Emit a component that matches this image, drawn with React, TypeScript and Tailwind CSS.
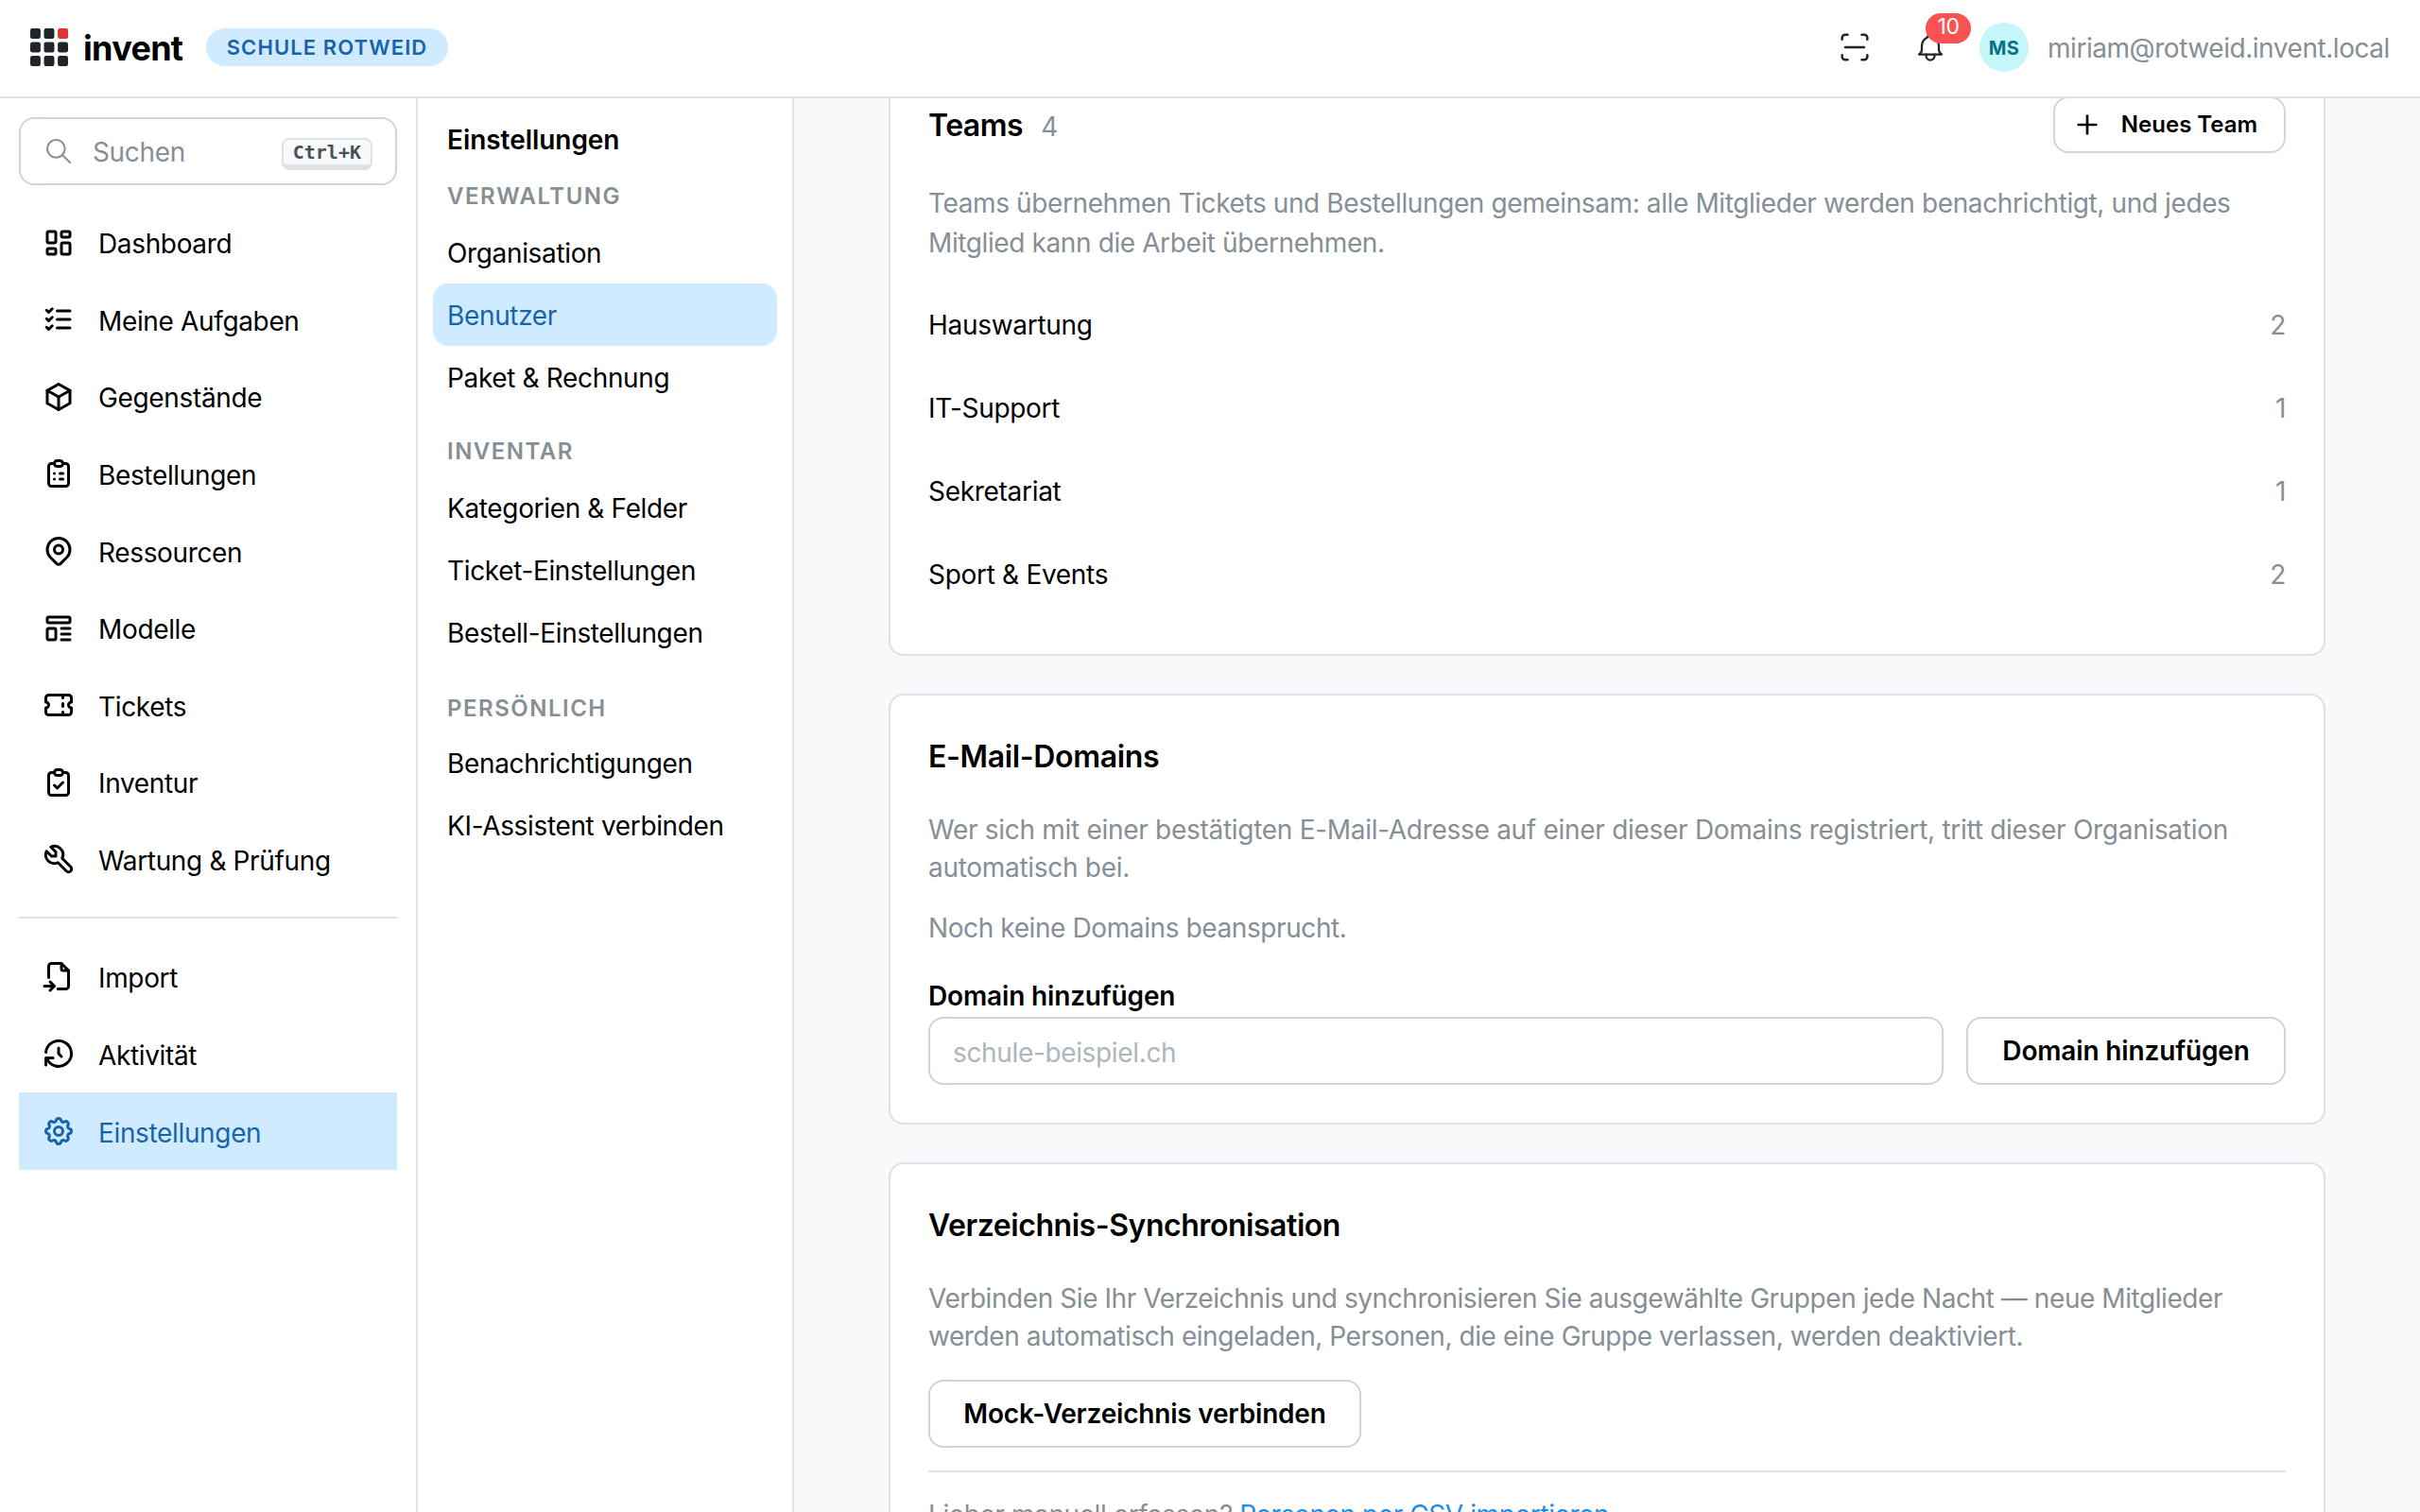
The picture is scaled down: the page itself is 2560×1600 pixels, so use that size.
import type { ReactNode } from "react";
import {
  TbBox,
  TbClipboardCheck,
  TbClipboardList,
  TbFileImport,
  TbHistory,
  TbLayoutDashboard,
  TbListCheck,
  TbMapPin,
  TbPlus,
  TbBell,
  TbSearch,
  TbSettings,
  TbTemplate,
  TbTicket,
  TbTool,
} from "react-icons/tb";
import { clsx } from "clsx";

const mainNav = [
  { label: "Dashboard", icon: TbLayoutDashboard },
  { label: "Meine Aufgaben", icon: TbListCheck },
  { label: "Gegenstände", icon: TbBox },
  { label: "Bestellungen", icon: TbClipboardList },
  { label: "Ressourcen", icon: TbMapPin },
  { label: "Modelle", icon: TbTemplate },
  { label: "Tickets", icon: TbTicket },
  { label: "Inventur", icon: TbClipboardCheck },
  { label: "Wartung & Prüfung", icon: TbTool },
];

const secondaryNav = [
  { label: "Import", icon: TbFileImport },
  { label: "Aktivität", icon: TbHistory },
  { label: "Einstellungen", icon: TbSettings, active: true },
];

const settingsNav = [
  { title: "Verwaltung", items: ["Organisation", "Benutzer", "Paket & Rechnung"] },
  {
    title: "Inventar",
    items: ["Kategorien & Felder", "Ticket-Einstellungen", "Bestell-Einstellungen"],
  },
  { title: "Persönlich", items: ["Benachrichtigungen", "KI-Assistent verbinden"] },
];

const teams = [
  { name: "Hauswartung", members: 2 },
  { name: "IT-Support", members: 1 },
  { name: "Sekretariat", members: 1 },
  { name: "Sport & Events", members: 2 },
];

function Logo() {
  return (
    <svg viewBox="0 0 22 22" className="size-10">
      {[0, 8, 16].map((y) =>
        [0, 8, 16].map((x) => (
          <rect
            key={`${x}-${y}`}
            x={x}
            y={y}
            width="6"
            height="6"
            rx="1.2"
            fill={x === 16 && y === 0 ? "#e03131" : "#212529"}
          />
        ))
      )}
    </svg>
  );
}

function ScanIcon() {
  return (
    <svg
      viewBox="0 0 24 24"
      className="size-10"
      fill="none"
      stroke="#212529"
      strokeWidth="1.5"
      strokeLinecap="round"
      strokeLinejoin="round"
    >
      <path d="M4 7v-1a2 2 0 0 1 2-2h1.5M4 17v1a2 2 0 0 0 2 2h1.5M16.5 4h1.5a2 2 0 0 1 2 2v1M16.5 20h1.5a2 2 0 0 0 2-2v-1M6 12h12" />
    </svg>
  );
}

function NavItem({ label, icon: Icon, active }: { label: string; icon: any; active?: boolean }) {
  return (
    <a
      className={clsx(
        "flex flex-1 items-center gap-6 px-6",
        active && "bg-[#d0ebff] text-[#1864ab]"
      )}
    >
      <Icon className="size-9 shrink-0" />
      <span className="pt-[3px]">{label}</span>
    </a>
  );
}

function Card({ children, className }: { children: ReactNode; className?: string }) {
  return (
    <section
      className={clsx("rounded-2xl border-2 border-[#dee2e6] bg-white px-10", className)}
    >
      {children}
    </section>
  );
}

function Button({ children, className }: { children: ReactNode; className?: string }) {
  return (
    <button
      className={clsx(
        "flex shrink-0 items-center justify-center rounded-2xl border-2 border-[#ced4da] bg-white font-semibold",
        className
      )}
    >
      {children}
    </button>
  );
}

export default function App() {
  return (
    <div className="flex h-[1600px] w-[2560px] flex-col overflow-hidden bg-white font-['Inter',sans-serif] text-[28px] leading-10 tracking-[-0.35px] text-black">
      <header className="flex h-[104px] shrink-0 items-center border-b-2 border-[#dee2e6] px-8 pb-0.5">
        <Logo />
        <span className="ml-4 w-[130px] pt-px text-[36px] font-bold tracking-[-0.7px]">invent</span>
        <span className="flex h-10 w-64 items-center justify-center rounded-full bg-[#d0ebff] text-[22px] font-semibold tracking-[1.1px] text-[#1864ab] uppercase">
          Schule Rotweid
        </span>

        <div className="ml-auto flex items-center">
          <ScanIcon />
          <div className="relative ml-[42px]">
            <TbBell className="size-9 text-[#212529] [stroke-width:1.5]" />
            <span className="absolute -top-[18px] left-[13px] flex h-8 w-12 items-center justify-center rounded-full bg-[#fa5252] pb-1 text-[23px] text-white">
              10
            </span>
          </div>
          <span className="ml-[34px] flex size-[52px] items-center justify-center rounded-full bg-[#c5f6fa] pt-px text-[20px] font-bold tracking-[0.4px] text-[#0b7285]">
            MS
          </span>
          <span className="ml-5 w-[362px] pt-px tracking-[-0.45px] whitespace-nowrap text-[#868e96]">
            miriam@rotweid.invent.local
          </span>
        </div>
      </header>

      <div className="flex min-h-0 flex-1">
        <aside className="w-[442px] shrink-0 border-r-2 border-[#dee2e6] px-5 pt-5">
          <div className="flex h-[72px] items-center rounded-2xl border-2 border-[#ced4da] px-6">
            <TbSearch className="size-8 text-[#868e96] [stroke-width:1.5]" />
            <span className="ml-5 pt-px text-[#868e96]">Suchen</span>
            <kbd className="mt-1.5 ml-auto flex h-[34px] items-center rounded-lg border-2 border-b-[6px] border-[#dee2e6] bg-[#f8f9fa] px-2.5 font-['DejaVu_Sans_Mono',monospace] text-[20px] font-bold tracking-normal text-[#495057]">
              Ctrl+K
            </kbd>
          </div>

          <nav className="mt-5 flex h-[734px] flex-col">
            {mainNav.map((item) => (
              <NavItem key={item.label} {...item} />
            ))}
          </nav>
          <hr className="my-5 border-t-2 border-[#dee2e6]" />
          <nav className="flex h-[246px] flex-col">
            {secondaryNav.map((item) => (
              <NavItem key={item.label} {...item} />
            ))}
          </nav>
        </aside>

        {/* Settings sections */}
        <nav className="w-[398px] shrink-0 border-r-2 border-[#dee2e6] px-4 pt-6">
          <h2 className="px-[15px] font-semibold tracking-[-0.05px]">Einstellungen</h2>
          {settingsNav.map((group, i) => (
            <div key={group.title} className={i === 0 ? "mt-5" : "mt-[26px]"}>
              <h3
                className={clsx(
                  "h-[46px] px-[15px] text-[24px] font-semibold tracking-[1.5px] text-[#868e96] uppercase",
                  i === 2 && "pt-0.5"
                )}
              >
                {group.title}
              </h3>
              {group.items.map((item) => (
                <a
                  key={item}
                  className={clsx(
                    "flex h-[66px] items-center rounded-2xl px-[15px] pt-0.5",
                    item === "Benutzer" && "bg-[#d0ebff] text-[#1864ab]"
                  )}
                >
                  {item}
                </a>
              ))}
            </div>
          ))}
        </nav>

        <main className="flex flex-1 flex-col gap-10 overflow-hidden bg-[#f8f9fa] px-[100px]">
          <Card className="-mt-20 shrink-0 pt-[76px] pb-10">
            <div className="flex h-[60px] items-center">
              <h2 className="pt-0.5 text-[32px] font-semibold tracking-[-0.5px]">Teams</h2>
              <span className="ml-[19px] pt-1 text-[#868e96]">4</span>
              <Button className="ml-auto h-[60px] w-[246px] gap-5 pr-2.5 text-[24px] tracking-normal">
                <TbPlus className="size-8" />
                Neues Team
              </Button>
            </div>
            <p className="mt-8 leading-[42px] tracking-[-0.39px] text-[#868e96]">
              Teams übernehmen Tickets und Bestellungen gemeinsam: alle Mitglieder werden
              benachrichtigt, und jedes Mitglied kann die Arbeit übernehmen.
            </p>
            <ul className="mt-[22px]">
              {teams.map((team) => (
                <li key={team.name} className="flex h-[88px] items-center justify-between">
                  <span className="tracking-[-0.3px]">{team.name}</span>
                  <span className="text-[#868e96]">{team.members}</span>
                </li>
              ))}
            </ul>
          </Card>

          <Card className="h-[456px] shrink-0 pt-[42px]">
            <h2 className="h-11 pt-[3px] text-[32px] font-semibold">E-Mail-Domains</h2>
            <p className="mt-9 tracking-[-0.29px] text-[#868e96]">
              Wer sich mit einer bestätigten E-Mail-Adresse auf einer dieser Domains registriert,
              tritt dieser Organisation automatisch bei.
            </p>
            <p className="mt-6 tracking-[-0.4px] text-[#868e96]">Noch keine Domains beansprucht.</p>
            <label className="mt-8 block font-semibold tracking-[-0.15px]">
              Domain hinzufügen
            </label>
            <div className="mt-0.5 flex gap-6">
              <input
                placeholder="schule-beispiel.ch"
                className="h-[72px] min-w-0 flex-1 rounded-2xl border-2 border-[#ced4da] px-6 pt-1 placeholder:text-[#adb5bd]"
              />
              <Button className="h-[72px] w-[338px] tracking-[-0.15px]">Domain hinzufügen</Button>
            </div>
          </Card>

          <Card className="h-[460px] shrink-0 pt-[42px]">
            <h2 className="h-11 pt-[3px] text-[32px] font-semibold tracking-[-0.45px]">
              Verzeichnis-Synchronisation
            </h2>
            <p className="mt-9 tracking-[-0.43px] text-[#868e96]">
              Verbinden Sie Ihr Verzeichnis und synchronisieren Sie ausgewählte Gruppen jede Nacht —
              neue Mitglieder werden automatisch eingeladen, Personen, die eine Gruppe verlassen,
              werden deaktiviert.
            </p>
            <Button className="mt-[26px] h-[72px] w-[458px] tracking-[-0.2px]">
              Mock-Verzeichnis verbinden
            </Button>
            <hr className="mt-6 border-t-2 border-[#dee2e6]" />
            <p className="mt-[25px] tracking-[-0.41px] text-[#868e96]">
              Lieber manuell erfassen? <a className="text-[#228be6]">Personen per CSV importieren</a>
            </p>
          </Card>
        </main>
      </div>
    </div>
  );
}
